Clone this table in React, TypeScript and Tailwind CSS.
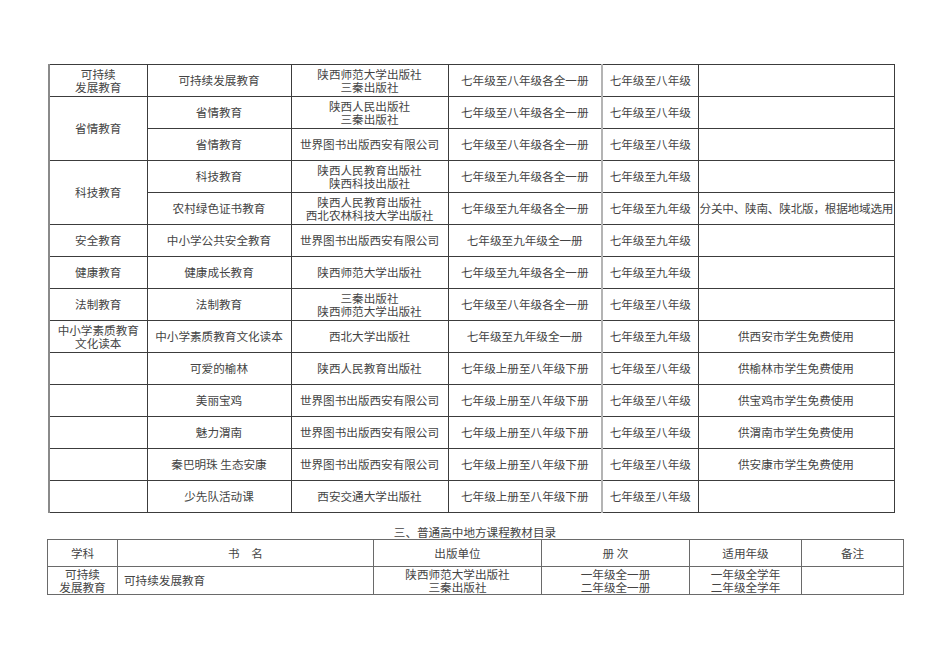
type Row = {
  subject?: string[];
  span?: number;
  book: string[];
  press: string[];
  vol: string;
  grade: string;
  note?: string;
  noteLeft?: boolean;
};

const rows: Row[] = [
  { subject: ["可持续", "发展教育"], book: ["可持续发展教育"], press: ["陕西师范大学出版社", "三秦出版社"], vol: "七年级至八年级各全一册", grade: "七年级至八年级" },
  { subject: ["省情教育"], span: 2, book: ["省情教育"], press: ["陕西人民出版社", "三秦出版社"], vol: "七年级至八年级各全一册", grade: "七年级至八年级" },
  { book: ["省情教育"], press: ["世界图书出版西安有限公司"], vol: "七年级至八年级各全一册", grade: "七年级至八年级" },
  { subject: ["科技教育"], span: 2, book: ["科技教育"], press: ["陕西人民教育出版社", "陕西科技出版社"], vol: "七年级至九年级各全一册", grade: "七年级至九年级" },
  { book: ["农村绿色证书教育"], press: ["陕西人民教育出版社", "西北农林科技大学出版社"], vol: "七年级至九年级各全一册", grade: "七年级至九年级", note: "分关中、陕南、陕北版，根据地域选用", noteLeft: true },
  { subject: ["安全教育"], book: ["中小学公共安全教育"], press: ["世界图书出版西安有限公司"], vol: "七年级至九年级全一册", grade: "七年级至九年级" },
  { subject: ["健康教育"], book: ["健康成长教育"], press: ["陕西师范大学出版社"], vol: "七年级至九年级各全一册", grade: "七年级至九年级" },
  { subject: ["法制教育"], book: ["法制教育"], press: ["三秦出版社", "陕西师范大学出版社"], vol: "七年级至八年级各全一册", grade: "七年级至八年级" },
  { subject: ["中小学素质教育", "文化读本"], book: ["中小学素质教育文化读本"], press: ["西北大学出版社"], vol: "七年级至九年级全一册", grade: "七年级至九年级", note: "供西安市学生免费使用" },
  { subject: [""], book: ["可爱的榆林"], press: ["陕西人民教育出版社"], vol: "七年级上册至八年级下册", grade: "七年级至八年级", note: "供榆林市学生免费使用" },
  { subject: [""], book: ["美丽宝鸡"], press: ["世界图书出版西安有限公司"], vol: "七年级上册至八年级下册", grade: "七年级至八年级", note: "供宝鸡市学生免费使用" },
  { subject: [""], book: ["魅力渭南"], press: ["世界图书出版西安有限公司"], vol: "七年级上册至八年级下册", grade: "七年级至八年级", note: "供渭南市学生免费使用" },
  { subject: [""], book: ["秦巴明珠 生态安康"], press: ["世界图书出版西安有限公司"], vol: "七年级上册至八年级下册", grade: "七年级至八年级", note: "供安康市学生免费使用" },
  { subject: [""], book: ["少先队活动课"], press: ["西安交通大学出版社"], vol: "七年级上册至八年级下册", grade: "七年级至八年级" },
];

function Lines({ items }: { items: string[] }) {
  return (
    <>
      {items.map((t, i) => (
        <div key={i}>{t}</div>
      ))}
    </>
  );
}

const td = "border border-[#3c3c3c] p-0 text-center align-middle";
const td2 = "border border-[#6a6a6a] p-0";

export default function App() {
  return (
    <div
      className="min-h-[672px] w-[950px] bg-white pl-[48px] pt-[64px] text-[11.6px] leading-[13px] text-[#444]"
      style={{ fontFamily: '"Noto Sans CJK SC", "Noto Sans", sans-serif' }}
    >
      <table className="w-[845px] table-fixed border-collapse">
        <colgroup>
          <col className="w-[98px]" />
          <col className="w-[144px]" />
          <col className="w-[157px]" />
          <col className="w-[154px]" />
          <col className="w-[96px]" />
          <col className="w-[196px]" />
        </colgroup>
        <tbody>
          {rows.map((r, i) => (
            <tr key={i} className="h-[32px]">
              {r.subject && (
                <td rowSpan={r.span ?? 1} className={`${td} border-l-2 border-l-[#8a8a8a]`}>
                  <Lines items={r.subject} />
                </td>
              )}
              <td className={td}>
                <Lines items={r.book} />
              </td>
              <td className={td}>
                <Lines items={r.press} />
              </td>
              <td className={`${td} border-r-2 border-r-[#b4b4b4]`}>{r.vol}</td>
              <td className={`${td} border-l-2 border-l-[#b4b4b4]`}>{r.grade}</td>
              <td className={`${td} ${r.noteLeft ? "whitespace-nowrap pl-[1px] text-left tracking-[-0.2px]" : ""}`}>{r.note ?? ""}</td>
            </tr>
          ))}
        </tbody>
      </table>

      <div className="ml-[-1px] mt-[13px] h-[13px] w-[856px] text-center leading-[13px]">
        三、普通高中地方课程教材目录
      </div>

      <table className="ml-[-1px] w-[856px] table-fixed border-collapse">
        <colgroup>
          <col className="w-[70px]" />
          <col className="w-[256px]" />
          <col className="w-[168px]" />
          <col className="w-[148px]" />
          <col className="w-[112px]" />
          <col className="w-[102px]" />
        </colgroup>
        <tbody>
          <tr className="h-[27px]">
            <td className={`${td2} text-center`}>学科</td>
            <td className={`${td2} text-center`}>书　名</td>
            <td className={`${td2} text-center`}>出版单位</td>
            <td className={`${td2} text-center`}>册 次</td>
            <td className={`${td2} text-center`}>适用年级</td>
            <td className={`${td2} text-center`}>备注</td>
          </tr>
          <tr className="h-[27px]">
            <td className={`${td2} pt-[1px] text-center align-top`}>
              <div>可持续</div>
              <div>发展教育</div>
            </td>
            <td className={`${td2} pl-[6px] text-left`}>可持续发展教育</td>
            <td className={`${td2} pt-[1px] text-center align-top`}>
              <div>陕西师范大学出版社</div>
              <div>三秦出版社</div>
            </td>
            <td className={`${td2} pt-[1px] text-center align-top`}>
              <div>一年级全一册</div>
              <div>二年级全一册</div>
            </td>
            <td className={`${td2} pt-[1px] text-center align-top`}>
              <div>一年级全学年</div>
              <div>二年级全学年</div>
            </td>
            <td className={td2}></td>
          </tr>
        </tbody>
      </table>
    </div>
  );
}
